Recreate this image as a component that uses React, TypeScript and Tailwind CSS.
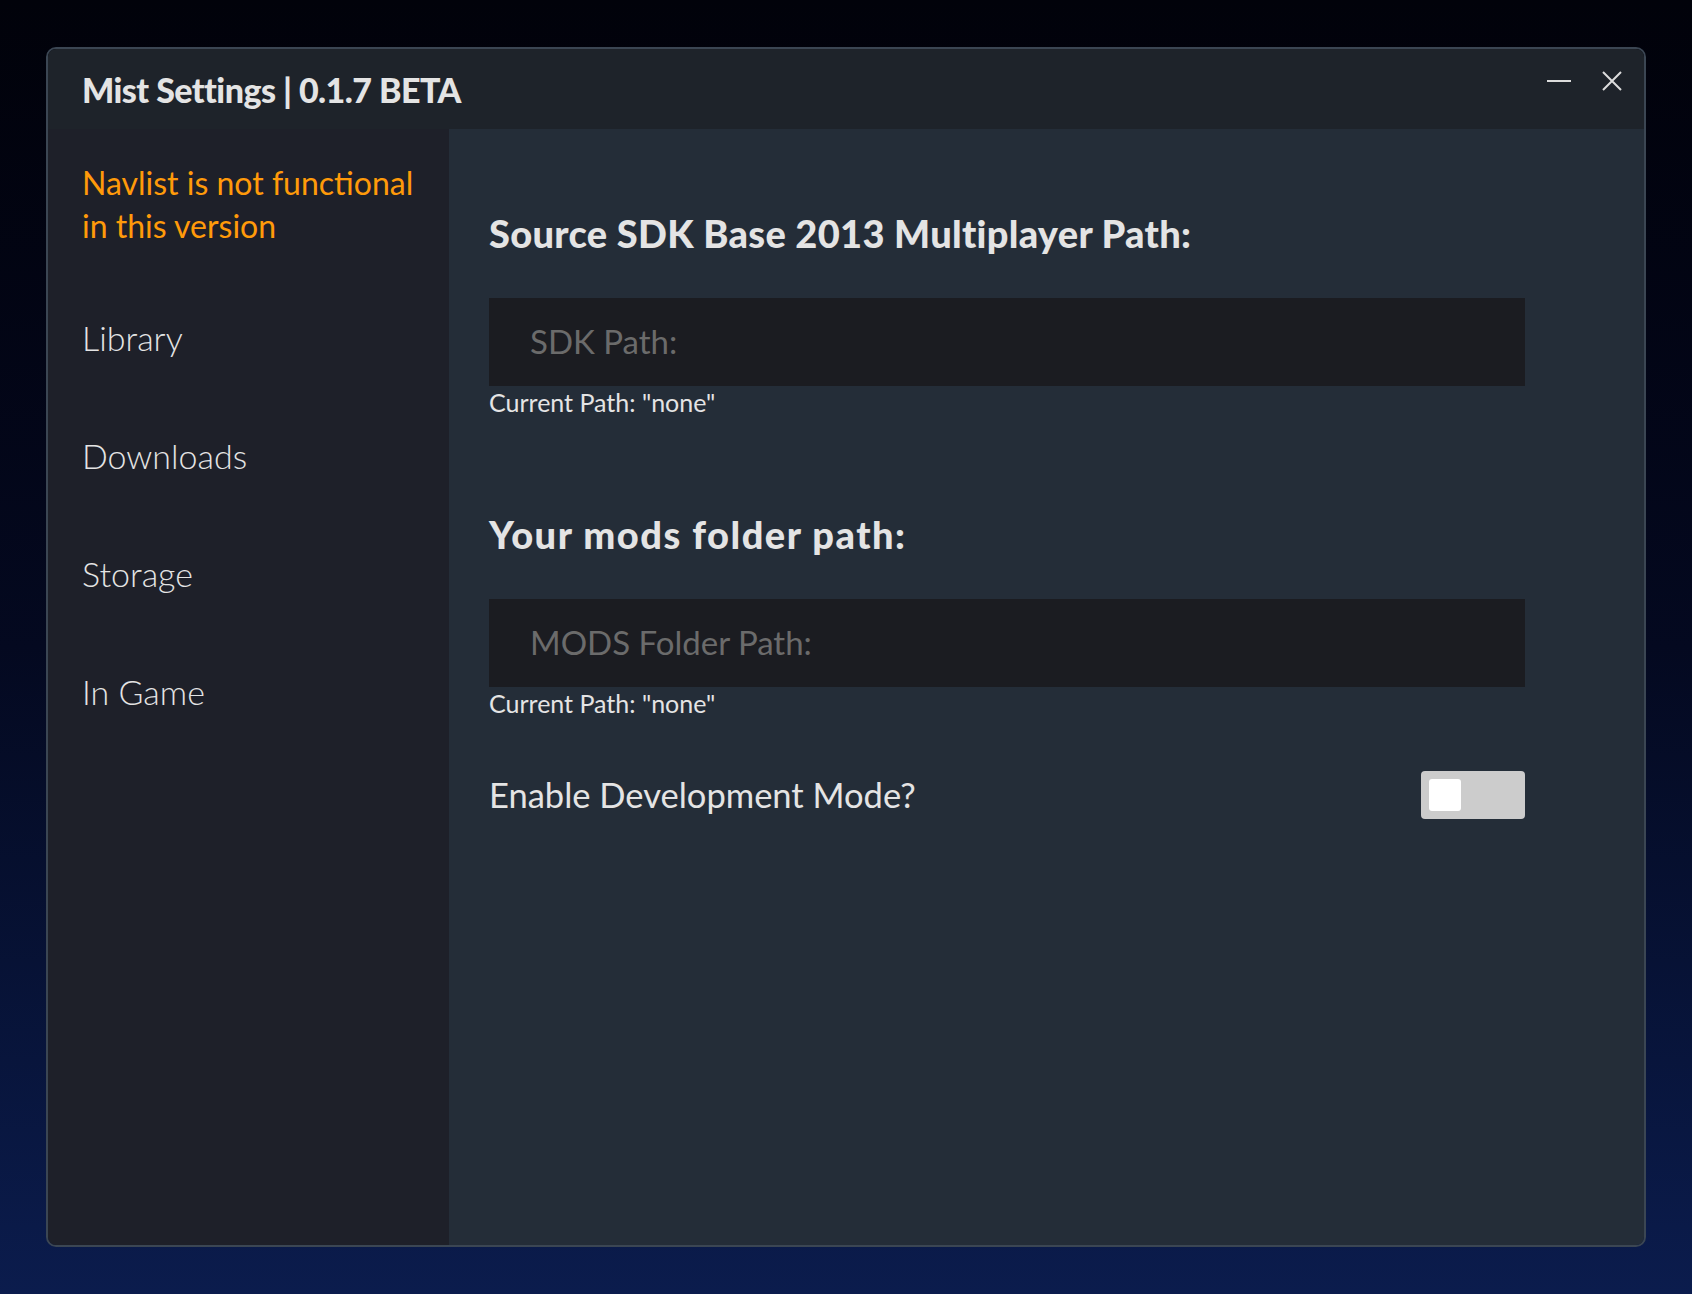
const navItems = ['Library', 'Downloads', 'Storage', 'In Game'];

function PathField({
  title,
  placeholder,
  tracking,
}: {
  title: string;
  placeholder: string;
  tracking: string;
}) {
  return (
    <div className="flex flex-col">
      <h2 className={`text-[38px] leading-[46px] font-black text-[#e4e4e4] ${tracking}`}>{title}</h2>
      <div className="mt-[42px] flex h-[88px] items-center bg-[#1b1c21] pl-[41px]">
        <span className="text-[33px] text-[#6b6b6b]">{placeholder}</span>
      </div>
      <p className="mt-px text-[25px] leading-[30px] text-[#e4e4e4]">Current Path: "none"</p>
    </div>
  );
}

function Toggle() {
  return (
    <div className="flex h-[48px] w-[104px] items-center rounded-[4px] bg-[#cccccc] px-[8px]">
      <div className="h-[32px] w-[32px] rounded-[3px] bg-white" />
    </div>
  );
}

export default function App() {
  return (
    <div
      className="h-[1294px] w-full bg-gradient-to-b from-[#01020a] via-[#040920] to-[#0b1c4d] pl-[46px] pt-[47px]"
      style={{ fontFamily: 'Lato, "Noto Sans", sans-serif' }}
    >
      <div className="flex h-[1200px] w-[1600px] flex-col overflow-hidden rounded-[10px] border-2 border-[#3b4653]">
        {/* title bar */}
        <div className="flex h-[80px] shrink-0 items-center justify-between bg-[#1e232a] pl-[34px] pr-[22px]">
          <h1 className="text-[34px] font-black tracking-[-0.55px] text-[#e4e4e4]">
            Mist Settings | 0.1.7 BETA
          </h1>
          <div className="flex items-center gap-[31px] self-start pt-[22px]">
            <svg width="24" height="20" viewBox="0 0 24 20" className="text-[#dcdcdc]">
              <line x1="0" y1="10" x2="24" y2="10" stroke="currentColor" strokeWidth="2" />
            </svg>
            <svg width="20" height="20" viewBox="0 0 20 20" className="text-[#dcdcdc]">
              <path d="M1 1 L19 19 M19 1 L1 19" stroke="currentColor" strokeWidth="2" fill="none" />
            </svg>
          </div>
        </div>

        <div className="flex flex-1">
          {/* sidebar */}
          <aside className="w-[401px] shrink-0 bg-[#1e2029] pl-[34px] pt-[32px]">
            <p className="text-[32px] leading-[43px] text-[#ff9a0a]">
              Navlist is not functional
              <br />
              in this version
            </p>
            <nav className="mt-[32px] flex flex-col">
              {navItems.map((item) => (
                <a key={item} className="text-[34px] leading-[118px] font-light text-[#e4e4e4]">
                  {item}
                </a>
              ))}
            </nav>
          </aside>

          {/* main */}
          <main className="flex-1 bg-[#242d38] pl-[40px] pt-[81px]">
            <div className="flex w-[1036px] flex-col">
              <PathField
                title="Source SDK Base 2013 Multiplayer Path:"
                placeholder="SDK Path:"
                tracking="tracking-[0.3px]"
              />
              <div className="mt-[94px]">
                <PathField
                  title="Your mods folder path:"
                  placeholder="MODS Folder Path:"
                  tracking="tracking-[1.5px]"
                />
              </div>
              <div className="mt-[51px] flex items-center justify-between">
                <span className="text-[34.5px] text-[#e4e4e4]">Enable Development Mode?</span>
                <Toggle />
              </div>
            </div>
          </main>
        </div>
      </div>
    </div>
  );
}
